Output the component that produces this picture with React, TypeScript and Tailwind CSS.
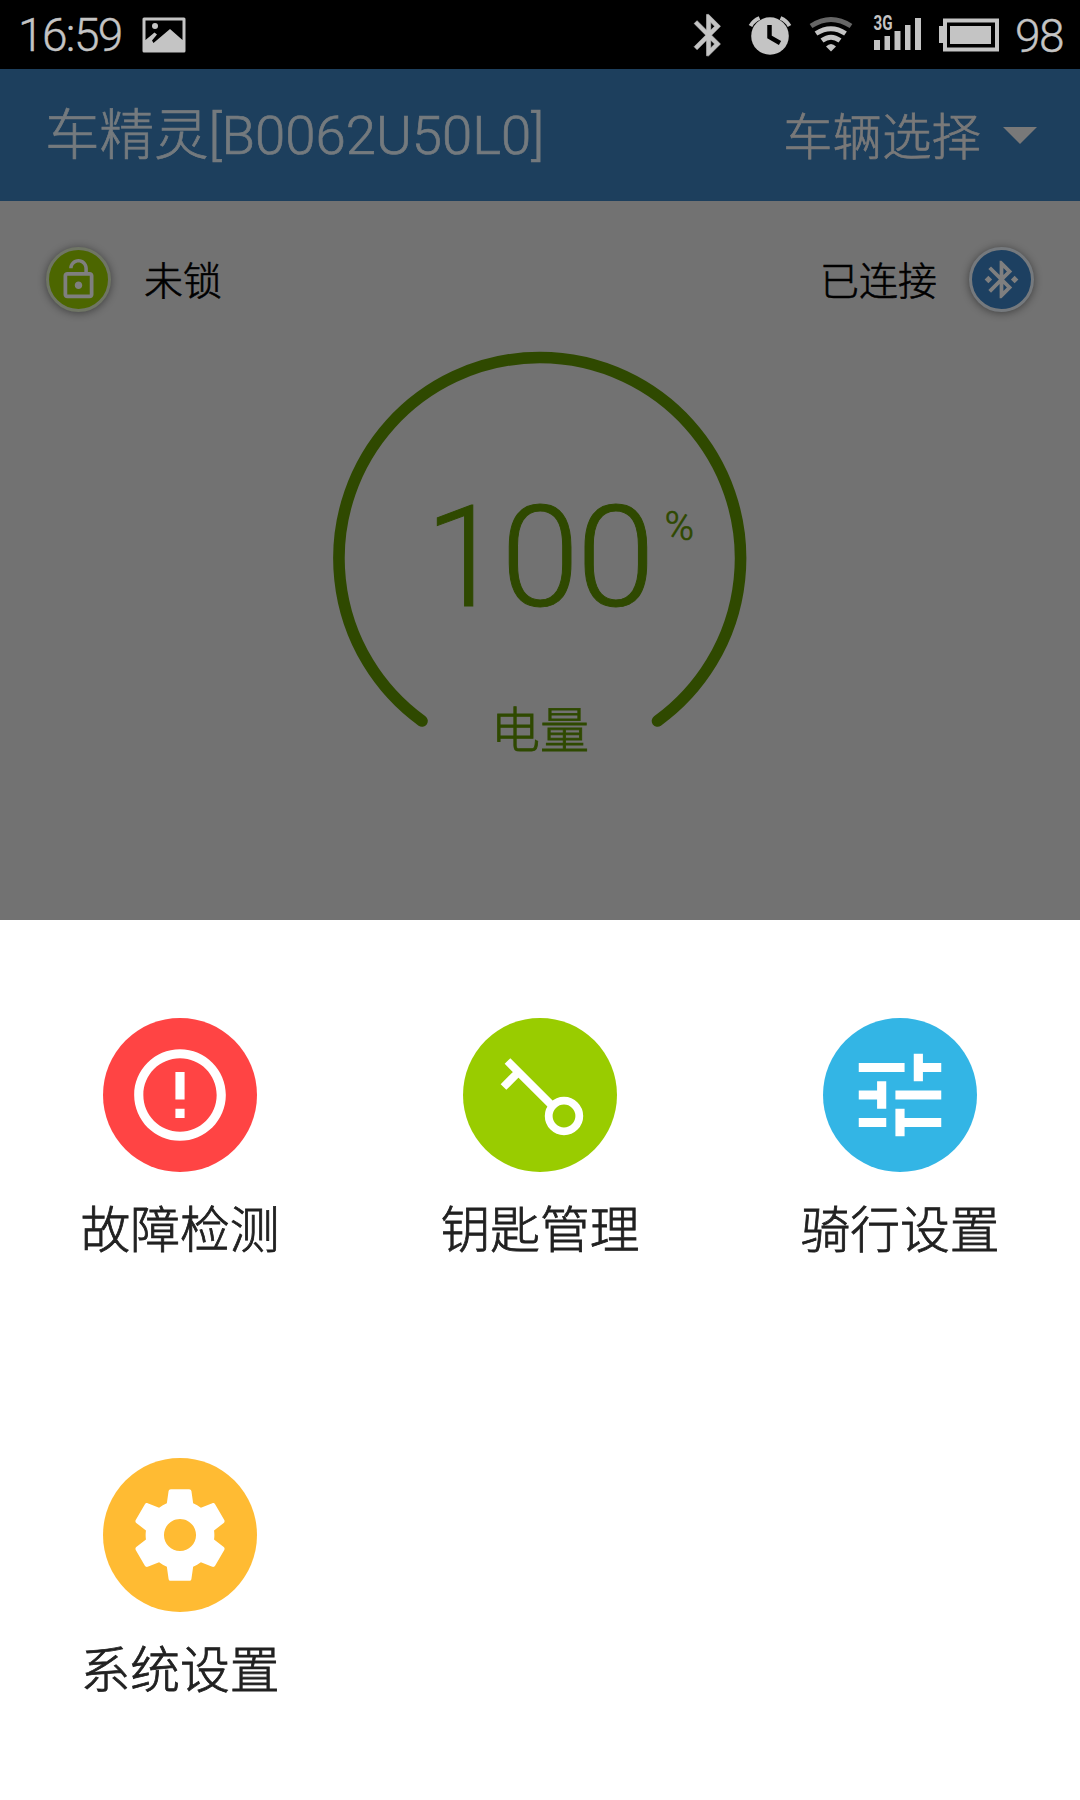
import type { ReactNode } from "react";

const FONT = "font-['Roboto','Noto_Sans_CJK_SC',sans-serif]";

function StatusBar() {
  return (
    <div className="flex h-[69px] items-center bg-black text-[#c4c4c4]">
      <span className="ml-[18px] w-[124px] pt-[2px] text-[46px] leading-[69px] font-light tracking-[-1.600px] whitespace-nowrap [-webkit-text-stroke:0.400px_currentColor]">16:59</span>
      <svg className="h-[36px] w-[44px]" viewBox="0 0 44 36">
        <path
          fill="currentColor"
          fillRule="evenodd"
          d="M2 0.500H42Q43.500 0.500 43.500 2V34Q43.500 35.500 42 35.500H2Q0.500 35.500 0.500 34V2Q0.500 0.500 2 0.500ZM3.500 3.500V23L12.500 15.500L15 17.500L10 23.500L11.500 26L28 12L40.500 23V3.500Z"
        />
        <circle cx="13" cy="9" r="3" fill="currentColor" />
      </svg>
      <svg className="ml-[497px] h-[69px] w-[390px]" viewBox="0 0 390 69">
        <g fill="currentColor" stroke="currentColor" strokeWidth="0.300" transform="translate(0.800 10.300) scale(2.07)">
          <path d="M17.710 7.710L12 2h-1v7.590L6.410 5 5 6.410 10.590 12 5 17.590 6.410 19 11 14.410V22h1l5.710-5.710-4.300-4.290 4.300-4.290zM13 5.830l1.880 1.880L13 9.590V5.830zm1.880 10.460L13 18.170v-3.760l1.880 1.880z" />
        </g>
        <circle cx="87" cy="36" r="18.800" fill="currentColor" />
        <path d="M86.500 25V37L97 43" fill="none" stroke="#000" strokeWidth="4.500" />
        <path d="M67.500 26Q70.500 20.500 76.500 18M106.500 26Q103.500 20.500 97.500 18" fill="none" stroke="currentColor" strokeWidth="4" />
        <g fill="none" stroke="currentColor" strokeWidth="5">
          <path d="M128 26Q148 13 168 26" stroke="#666" />
          <path d="M133 33.500Q148 24 162.500 33.500" />
          <path d="M139 40.500Q148 34 157 40.500" />
        </g>
        <path d="M143 46.500Q148 41.500 153 46.500L148 51.500Z" fill="currentColor" />
        <text x="190.500" y="30" className="fill-current text-[21px] font-bold" textLength="19" lengthAdjust="spacingAndGlyphs">3G</text>
        <path d="M191 40h6v10h-6zM201.500 36h5.500v14h-5.500zM211.500 31h6v19h-6zM222 25h5.500v25h-5.500zM232 18h6v32h-6z" fill="currentColor" />
        <rect x="262" y="20.500" width="52" height="29" fill="none" stroke="currentColor" strokeWidth="4" />
        <path d="M256 26h5v17h-5zM267 26h41v18h-41z" fill="currentColor" />
        <text x="332" y="51.500" letterSpacing="-1.500" className="fill-current text-[46px] font-light [stroke-width:0.400px] [stroke:currentColor]">98</text>
      </svg>
    </div>
  );
}

function TitleBar() {
  return (
    <header className="flex h-[132px] items-center justify-between bg-[#1d3f5d] pr-[43px] pl-[45px] text-[#747a7e]">
      <h1 className="text-[54.500px] leading-[132px] font-light whitespace-nowrap [-webkit-text-stroke:0.700px_currentColor]">车精灵[B0062U50L0]</h1>
      <div className="flex items-center gap-[22px] text-[#797979]">
        <span className="pt-[5px] text-[49.500px] leading-[132px] font-light [-webkit-text-stroke:0.700px_currentColor]">车辆选择</span>
        <svg className="h-[17px] w-[34px]" viewBox="0 0 34 17">
          <path d="M0 0H34L17 17Z" fill="currentColor" />
        </svg>
      </div>
    </header>
  );
}

function Badge({ color, children }: { color: string; children: ReactNode }) {
  return (
    <div className={`flex size-[65px] items-center justify-center rounded-full border-[3px] text-[#7f7f7f] shadow-[0_1px_8px_rgba(0,0,0,0.45)] ${color}`}>
      {children}
    </div>
  );
}

function Gauge() {
  return (
    <svg className="mx-auto mt-[38px] h-[440px] w-[440px]" viewBox="320 350 440 440">
      <path d="M422 721A200.800 200.800 0 1 1 657.500 721" fill="none" stroke="#2f4900" strokeWidth="11.600" strokeLinecap="round" />
      <g fill="#2f4900" stroke="#2f4900" fontWeight="300">
        <text x="425" y="606" fontSize="141" textLength="230" lengthAdjust="spacing" strokeWidth="1">100</text>
        <text x="664.500" y="540" fontSize="40" strokeWidth="0.600">%</text>
        <text x="491" y="747.500" fontSize="49" strokeWidth="0.800">电量</text>
      </g>
    </svg>
  );
}

function MenuItem({ label, color, children }: { label: string; color: string; children: ReactNode }) {
  return (
    <div className="flex h-[440px] flex-col items-center">
      <div className={`flex size-[154px] items-center justify-center rounded-full text-white ${color}`}>{children}</div>
      <span className="mt-[22px] text-[49.800px] leading-[74px] font-light text-[#212121] [-webkit-text-stroke:0.800px_currentColor]">{label}</span>
    </div>
  );
}

function Icon({ d }: { d: string }) {
  return (
    <svg className="size-[110px]" viewBox="0 0 24 24" fill="currentColor">
      <path d={d} />
    </svg>
  );
}

export default function App() {
  return (
    <div className={`flex h-[1800px] w-[1080px] flex-col overflow-hidden bg-[#727272] ${FONT}`}>
      <StatusBar />
      <TitleBar />
      <main className="h-[719px] pt-[46px]">
        <div className="flex h-[65px] items-center justify-between px-[46px] text-[39px] font-light text-black [-webkit-text-stroke:0.600px_currentColor]">
          <div className="flex items-center gap-[33px]">
            <Badge color="bg-[#4c6600] border-[#6f7565]">
              <svg className="size-[45px]" viewBox="0 0 24 24" fill="currentColor">
                <path d="M12 17c1.100 0 2-.9 2-2s-.9-2-2-2-2 .9-2 2 .9 2 2 2zm6-9h-1V6c0-2.760-2.240-5-5-5S7 3.240 7 6h1.900c0-1.710 1.390-3.100 3.100-3.100 1.710 0 3.100 1.390 3.100 3.100v2H6c-1.100 0-2 .9-2 2v10c0 1.100.9 2 2 2h12c1.100 0 2-.9 2-2V10c0-1.100-.9-2-2-2zm0 12H6V10h12v10z" />
              </svg>
            </Badge>
            <span className="pt-[5px]">未锁</span>
          </div>
          <div className="flex items-center gap-[32px]">
            <span className="pt-[5px]">已连接</span>
            <Badge color="bg-[#1d4061] border-[#75797d]">
              <svg className="size-[45px]" viewBox="0 0 24 24" fill="currentColor">
                <path d="M7 12l-2-2-2 2 2 2 2-2zm10.710-4.290L12 2h-1v7.590L6.410 5 5 6.410 10.590 12 5 17.590 6.410 19 11 14.410V22h1l5.710-5.710-4.300-4.290 4.300-4.290zM13 5.830l1.880 1.880L13 9.590V5.830zm1.880 10.460L13 18.170v-3.760l1.880 1.880zM19 10l-2 2 2 2 2-2-2-2z" />
              </svg>
            </Badge>
          </div>
        </div>
        <Gauge />
      </main>
      <section className="grid h-[880px] grid-cols-3 content-start bg-white pt-[98px]">
        <MenuItem label="故障检测" color="bg-[#ff4444]">
          <Icon d="M11 15h2v2h-2zm0-8h2v6h-2zm.990-5C6.470 2 2 6.480 2 12s4.470 10 9.990 10C17.520 22 22 17.520 22 12S17.520 2 11.990 2zM12 20c-4.420 0-8-3.580-8-8s3.580-8 8-8 8 3.580 8 8-3.580 8-8 8z" />
        </MenuItem>
        <MenuItem label="钥匙管理" color="bg-[#99cc00]">
          <svg className="size-[154px]" viewBox="0 0 154 154" fill="none" stroke="currentColor">
            <path d="M44.500 43L89 87.500M55.500 54L40.500 69" strokeWidth="8" />
            <circle cx="101" cy="98" r="15.300" strokeWidth="7.800" />
          </svg>
        </MenuItem>
        <MenuItem label="骑行设置" color="bg-[#33b5e5]">
          <Icon d="M3 17v2h6v-2H3zM3 5v2h10V5H3zm10 16v-2h8v-2h-8v-2h-2v6h2zM7 9v2H3v2h4v2h2V9H7zm14 4v-2H11v2h10zm-6-4h2V7h4V5h-4V3h-2v6z" />
        </MenuItem>
        <MenuItem label="系统设置" color="bg-[#ffbb33]">
          <Icon d="M19.430 12.980c.04-.32.07-.64.07-.98s-.03-.66-.07-.98l2.110-1.650c.19-.15.24-.42.12-.64l-2-3.460c-.12-.22-.39-.3-.61-.22l-2.490 1c-.52-.4-1.080-.73-1.690-.98l-.38-2.650C14.460 2.180 14.250 2 14 2h-4c-.25 0-.46.18-.49.42l-.38 2.650c-.61.25-1.170.59-1.690.98l-2.490-1c-.23-.09-.49 0-.61.22l-2 3.460c-.13.22-.07.49.12.64l2.110 1.650c-.04.32-.07.65-.07.98s.03.66.07.98l-2.110 1.650c-.19.15-.24.42-.12.64l2 3.460c.12.22.39.3.61.22l2.490-1c.52.4 1.080.73 1.690.98l.38 2.650c.03.24.24.42.49.42h4c.25 0 .46-.18.49-.42l.38-2.650c.61-.25 1.170-.59 1.690-.98l2.490 1c.23.09.49 0 .61-.22l2-3.460c.12-.22.07-.49-.12-.64l-2.110-1.650zM12 15.500c-1.930 0-3.500-1.570-3.500-3.500s1.570-3.500 3.500-3.500 3.500 1.570 3.500 3.500-1.570 3.500-3.500 3.500z" />
        </MenuItem>
      </section>
    </div>
  );
}
